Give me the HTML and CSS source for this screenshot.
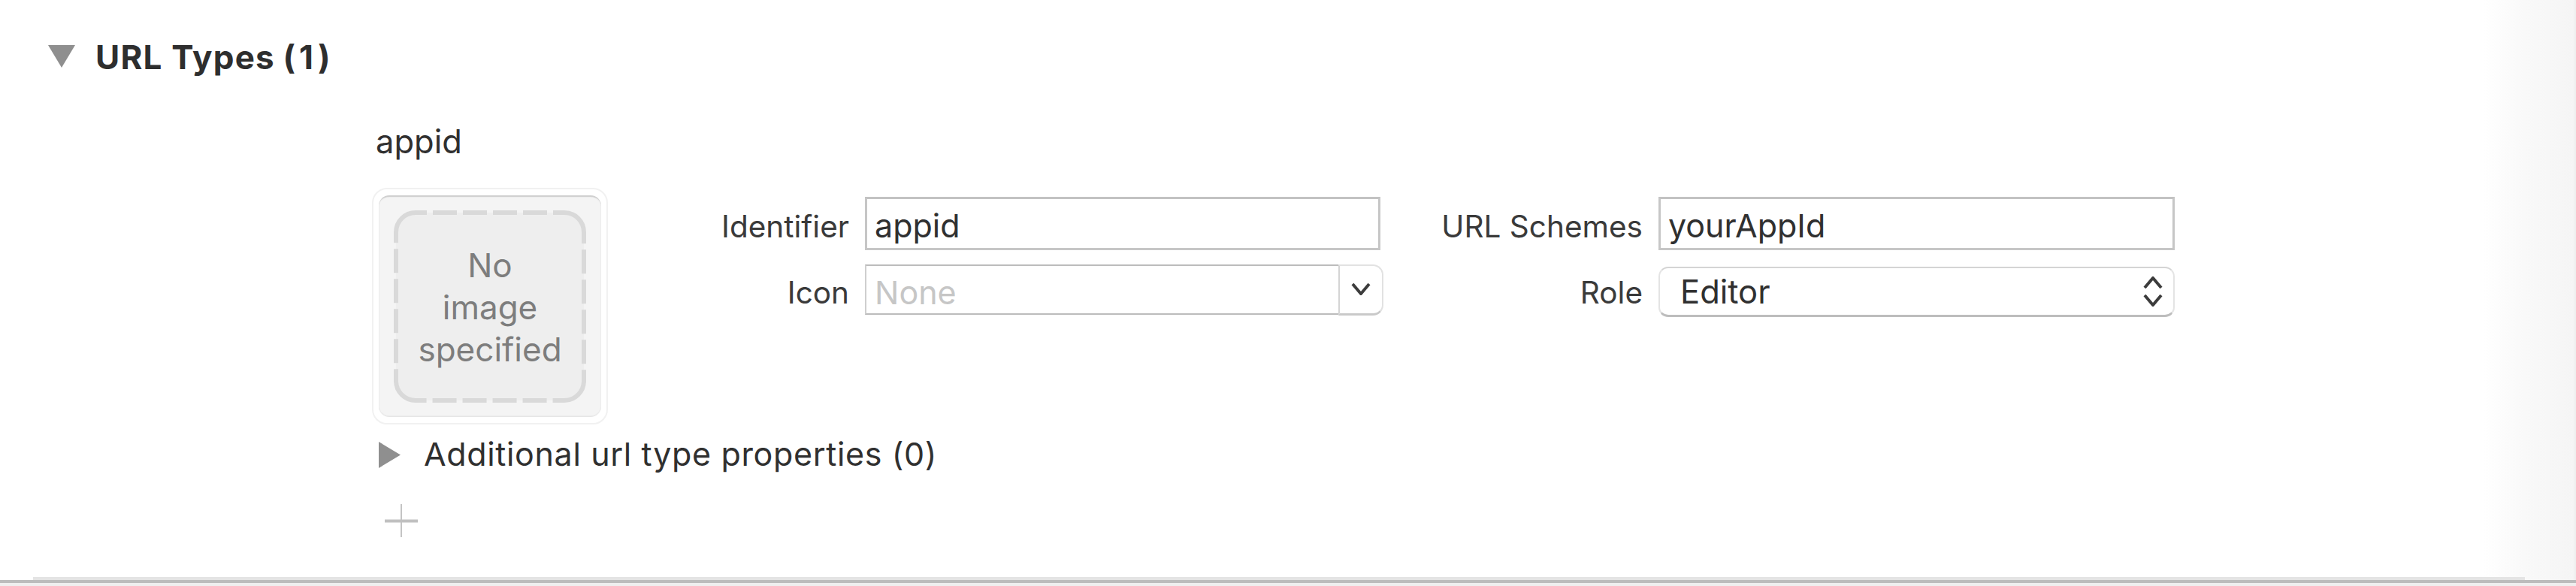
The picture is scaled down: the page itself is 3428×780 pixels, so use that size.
FILE: index.html
```html
<!DOCTYPE html>
<html lang="en">
<head>
<meta charset="utf-8">
<title>URL Types</title>
<link rel="stylesheet" href="styles.css">
</head>
<body>
<div class="page">
  <main class="content">
    <header class="section-head">
      <svg class="tri-down" width="36" height="30" viewBox="0 0 36 30"><path d="M0 0H36L18 30Z"/></svg>
      <h1 class="section-title">URL Types <span class="count">(1)</span></h1>
    </header>
    <div class="entry">
      <div class="entry-name">appid</div>
      <div class="entry-row">
        <div class="well">
          <div class="well-inner">
            <div class="well-drop">
              <svg class="well-dash" width="256" height="256" viewBox="0 0 256 256"><rect x="3" y="3" width="250" height="250" rx="26" ry="26"/></svg>
              <span class="well-text">No<br>image<br>specified</span>
            </div>
          </div>
        </div>
        <div class="form">
          <label class="lbl">Identifier</label>
          <div class="field">appid</div>
          <label class="lbl">URL Schemes</label>
          <div class="field">yourAppId</div>
          <label class="lbl lbl-low">Icon</label>
          <div class="combo">
            <div class="combo-input">None</div>
            <div class="combo-btn">
              <svg width="26" height="17" viewBox="0 0 26 17"><path d="M2 2L13 15L24 2"/></svg>
            </div>
          </div>
          <label class="lbl lbl-low">Role</label>
          <div class="popup">
            <span class="popup-val">Editor</span>
            <svg class="stepper" width="26" height="40" viewBox="0 0 26 40"><path d="M2 15L13 2L24 15M2 25L13 38L24 25"/></svg>
          </div>
        </div>
      </div>
      <div class="more">
        <svg class="tri-right" width="29" height="35" viewBox="0 0 29 35"><path d="M0 0L29 17.5L0 35Z"/></svg>
        <span class="more-text">Additional url type properties (0)</span>
      </div>
      <svg class="plus" width="44" height="44" viewBox="0 0 44 44"><path d="M22 0V44" class="plus-v"/><path d="M0 22.5H44" class="plus-h"/></svg>
    </div>
  </main>
  <footer class="rule">
    <div class="rule-light"></div>
    <div class="rule-dark"></div>
    <div class="rule-base"></div>
  </footer>
</div>
</body>
</html>
```
FILE: styles.css
```css
* { box-sizing: border-box; }
html, body { margin: 0; padding: 0; height: 100%; overflow: hidden; }
body { font-family: Inter, "Noto Sans", "Liberation Sans", sans-serif; color: #303030; }
.page {
  width: 3428px; height: 780px; display: flex; flex-direction: column;
  background: linear-gradient(90deg, #fff 0, #fff 3305px, #f9f9f9 3360px, #f5f5f5 3424px, #eee 3428px);
}
.content { flex: 1; display: flex; flex-direction: column; }
.section-head { display: flex; align-items: flex-start; padding: 60px 0 0 64px; height: 163px; }
.tri-down { fill: #8f8f8f; flex: none; }
.section-title { margin: -11px 0 0 27px; font-size: 44px; line-height: 54px; font-weight: 700; color: #2e2e2e; letter-spacing: 1.2px; white-space: nowrap; }
.count { letter-spacing: 5px; font-weight: 700; margin-left: -1px; }
.entry { padding-left: 495px; display: flex; flex-direction: column; align-items: flex-start; }
.entry-name { padding-left: 5px; font-size: 43.5px; line-height: 50px; height: 87px; }
.entry-row { display: flex; align-items: flex-start; }
.well { width: 314px; height: 315px; flex: none; border: 2px solid #f1f1f1; border-radius: 20px; padding: 8px 7px; background: #fff; display: flex; }
.well-inner { flex: 1; background: #f4f4f4; border-radius: 14px; border-top: 2px solid #d0d0d0; border-bottom: 1px solid #e6e6e6; box-shadow: inset 0 0 0 1px #ececec; padding: 18px 20px; display: flex; }
.well-drop { position: relative; flex: 1; display: flex; align-items: center; justify-content: center; text-align: center; }
.well-dash { position: absolute; left: 0; top: 0; }
.well-dash rect { fill: #eee; stroke: #d9d9d9; stroke-width: 6; stroke-dasharray: 70.8 8 32 8 32 8 32 8 32 8; stroke-dashoffset: 55.8; }
.well-text { position: relative; font-size: 44px; line-height: 56px; color: #7d7d7d; margin-top: 2px; }
.form {
  display: grid; grid-template-columns: 321px 686px 328px 687px; column-gap: 21px;
  grid-template-rows: 71px 70px; row-gap: 19px; margin-top: 12px; flex: none;
}
.lbl { font-size: 40.5px; line-height: 71px; text-align: right; color: #3a3a3a; padding-top: 4px; white-space: nowrap; }
.lbl-low { line-height: 67px; padding-top: 4px; }
.field { border: 3px solid #c6c6c6; border-top-color: #c2c2c2; padding: 0 10px; font-size: 43px; line-height: 70px; color: #303030; background: #fff; height: 71px; }
.combo { display: flex; width: 690px; height: 68px; }
.combo-input { flex: none; width: 630px; height: 67px; border: 2px solid #cfcfcf; border-top-color: #bcbcbc; border-bottom-color: #bcbcbc; border-right: 0; padding: 4px 11px 0; font-size: 43px; line-height: 63px; color: #c6c6c6; background: #fff; }
.combo-btn { flex: 1; border: 2px solid #e2e2e2; border-left-color: #d4d4d4; border-bottom: 3px solid #c9c9c9; border-radius: 0 14px 14px 0; display: flex; justify-content: center; padding-top: 22px; background: #fff; }
.combo-btn svg { fill: none; stroke: #3c3c3c; stroke-width: 4; }
.popup { display: flex; align-items: center; justify-content: space-between; width: 687px; height: 67px; margin-top: 3px; padding: 0 14px 0 27px; background: #fff; border: 2px solid #e4e4e4; border-top-color: #d4d4d4; border-bottom: 3px solid #bdbdbd; border-radius: 13px; font-size: 43.5px; color: #303030; }
.stepper { fill: none; stroke: #3c3c3c; stroke-width: 4; flex: none; }
.more { display: flex; align-items: center; margin-top: 22px; padding-left: 9px; height: 36px; }
.tri-right { fill: #8f8f8f; flex: none; }
.more-text { margin: -2px 0 0 31px; font-size: 43px; line-height: 50px; letter-spacing: 0.65px; white-space: nowrap; color: #303030; }
.plus { margin: 48px 0 0 17px; fill: none; display: block; }
.plus-v { stroke: #c4c4c4; stroke-width: 2; }
.plus-h { stroke: #c0c0c0; stroke-width: 4; }
.rule { flex: none; }
.rule-light { height: 4px; margin: 0 68px 0 44px; background: #e4e4e4; }
.rule-dark { height: 4px; background: #bcbcbc; }
.rule-base { height: 4px; background: #efefef; }
```
